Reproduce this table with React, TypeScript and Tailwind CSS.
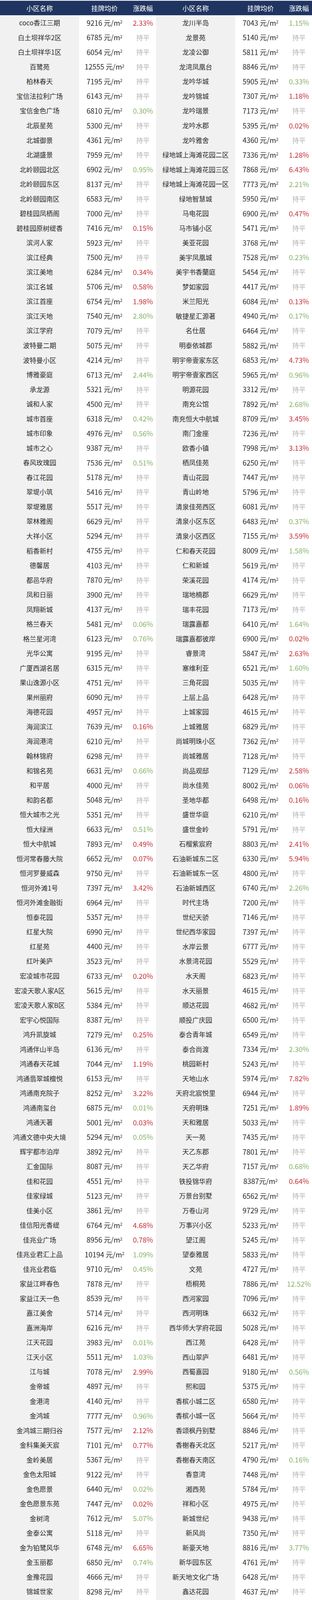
import React from 'react';

// name price change | name price change   ("-" = 持平, r = 上涨红, g = 绿)
const RAW = `
coco香江三期 9216 r2.33 龙川半岛 7043 g1.15
白土坝祥华2区 6785 - 龙景苑 5140 -
白土坝祥华1区 6054 - 龙凌公御 5811 -
百鹭苑 12555 - 龙湾凤凰台 8846 -
柏林春天 7195 - 龙吟华城 5905 g0.33
宝信法拉利广场 6143 - 龙吟锦城 7307 r1.18
宝信金色广场 6810 g0.30 龙吟瑞景 7173 -
北辰星苑 5300 - 龙吟水郡 5395 r0.02
北城御景 4361 - 龙吟雅舍 4360 -
北湖盛景 7959 - 绿地城上海滩花园二区 7336 r1.28
北岭颐园北区 6902 g0.95 绿地城上海滩花园三区 7868 r6.43
北岭颐园东区 8137 - 绿地城上海滩花园一区 7773 g2.21
北岭颐园南区 6583 - 绿地智慧城 5950 -
碧桂园凤栖阁 7000 - 马电花园 6900 r0.47
碧桂园原树缇香 7416 r0.15 马市铺小区 5471 -
滨河人家 5923 - 美亚花园 3768 -
滨江经典 7500 - 美宇凤凰城 7528 g0.23
滨江美地 6284 r0.34 美宇书香蘭庭 5454 -
滨江名城 5706 r0.58 梦如家园 4417 -
滨江首座 6754 r1.98 米兰阳光 6084 r0.13
滨江天地 7540 g2.80 敏捷星汇源著 4940 g0.17
滨江学府 7079 - 名仕居 6464 -
波特曼二期 5075 - 明泰依城郡 5882 -
波特曼小区 4214 - 明宇帝壹家东区 6853 r4.73
博雅豪庭 6713 g2.44 明宇帝壹家西区 5965 g0.96
承龙源 5321 - 明源花园 3312 -
诚和人家 4500 - 南充公馆 7892 g2.68
城市首座 6318 g0.42 南充恒大中航城 8709 r3.45
城市印象 4976 g0.56 南门金座 7236 -
城市之心 9387 - 欧香小镇 7998 r3.13
春风玫瑰园 7536 g0.51 栖凤佳苑 6250 -
春江花园 5178 - 青山花园 7447 -
翠堤小筑 5416 - 青山岭地 5796 -
翠堤雅居 5517 - 清泉佳苑西区 6081 -
翠林雅阁 6629 - 清泉小区东区 6483 g0.37
大祥小区 5294 - 清泉小区西区 7155 r3.59
稻香新村 4755 - 仁和春天花园 8009 g1.58
德馨居 4103 - 仁和新城 5619 -
都邑华府 7870 - 荣溪花园 4174 -
凤和日丽 3900 - 瑞地楠郡 6629 -
凤翔新城 4137 - 瑞丰花园 7173 -
格兰春天 5481 g0.06 瑞露嘉都 6410 g1.64
格兰星河湾 6123 g0.76 瑞露嘉都彼岸 6900 r0.02
光华公寓 9195 - 睿景湾 5847 r2.63
广厦西湖名居 6315 - 塞维利亚 6521 g1.60
果山逸源小区 4751 - 三角花园 5035 -
果州丽府 6090 - 上层上品 6428 -
海德花园 4957 - 上城家园 4615 -
海润滨江 7639 r0.16 上城雅居 6829 -
海润港湾 6210 - 尚城明珠小区 7362 -
翰林锦府 6298 - 尚城雅居 7128 -
和锦名苑 6631 g0.66 尚品观邸 7129 r2.58
和平居 4000 - 尚水佳苑 8002 r0.06
和韵名都 5048 - 圣地华都 6498 r0.16
恒大城市之光 5351 - 盛世华庭 6210 -
恒大绿洲 6633 g0.51 盛世金岭 5791 -
恒大中航城 7893 r0.49 石榴紫宸府 8803 r2.41
恒河常春藤大院 6652 r0.07 石油新城东二区 6330 r5.94
恒河罗曼威森 9750 - 石油新城东一区 4800 -
恒河外滩1号 7397 r3.42 石油新城西区 6740 g2.26
恒河外滩金融街 6964 - 时代主场 7200 -
恒泰花园 5357 - 世纪天骄 7146 -
红星大院 6990 - 世纪西华家园 7397 -
红星苑 4400 - 水岸云景 6777 -
红叶美庐 3523 - 水景湾花园 5529 -
宏凌城市花园 6733 r0.20 水天阁 6823 -
宏凌天歌人家A区 5615 - 水天丽景 4615 -
宏凌天歌人家B区 5384 - 顺达花园 4682 -
宏宇心悦国际 8387 - 顺投广庆园 6500 -
鸿升凯旋城 7279 r0.25 泰合青年城 6549 -
鸿通伴山半岛 6136 - 泰合尚渡 7334 g2.30
鸿通春天花城 7044 r1.19 桃园新村 5243 -
鸿通翡翠城檀悦 6153 - 天地山水 5974 r7.82
鸿通南充院子 8252 r3.22 天府北宸悦里 6944 -
鸿通南玺台 6875 g0.01 天府明珠 7251 r1.89
鸿通天著 5001 r0.03 天和雅居 5033 -
鸿通文德中央大境 5294 g0.05 天一苑 7435 -
辉宇都市泊岸 3892 - 天乙东郡 7801 -
汇金国际 8087 - 天乙华府 7157 g0.68
佳和花园 4551 - 铁投锦华府 8387! r0.64
佳家绿城 5123 - 万景台别墅 6562 -
佳美小区 3861 - 万卷山河 9729 -
佳信阳光香缇 6764 r4.68 万事兴小区 5233 -
佳兆业广场 8956 r0.78 望江阁 5245 -
佳兆业君汇上品 10194 g1.09 望泰雅居 5833 -
佳兆业君临 9710 g0.45 文苑 4727 -
家益江畔春色 7878 - 梧桐苑 7886 g12.52
家益江天一色 8539 - 西河家园 7096 -
嘉江美舍 5714 - 西河明珠 6632 -
嘉洲海岸 6216 - 西华师大学府花园 5028 -
江天花园 3983 g0.01 西江苑 6428 -
江天小区 5511 g1.03 西山翠庐 6481 -
江与城 7078 r2.99 西蜀嘉园 9180 g0.56
金帝城 4897 - 熙和园 5375 -
金港湾 4140 - 香槟小城二区 6580 -
金鸿城 7777 g0.96 香槟小城一区 5664 -
金鸿城三期归谷 7577 r2.12 香颂枫丹别墅 8846 -
金科集美天宸 7101 r0.77 香榭春天北区 5217 -
金岭美居 5367 - 香榭春天南区 4790 g0.16
金色太阳城 9122 - 香意湾 7448 -
金色愿景 6440 g0.02 湘西苑 5784 -
金色愿景东苑 7447 r0.02 祥和小区 4975 -
金树湾 7612 g5.07 新城世纪 9438 -
金泰公寓 5118 - 新风尚 7350 -
金为铂鹭风华 6748 r6.65 新豪天地 8816 g3.77
金玉丽都 6850 g0.74 新华园东区 4761 -
金豫花园 4666 - 新天地文化广场 6428 -
锦城世家 8298 - 鑫达花园 4637 -
锦上花苑 6737 g0.47 星光苑 5510 -
锦绣北湖 10000 - 星宇朗韵 7611 -
锦绣果州 3956 - 兴熙南 5428 -
锦绣华庭 7586 - 杏林小区 8452 -
锦绣江山东区 6393 - 延福雅居 5433 -
晶典雅筑 6315 - 阳光珑悦台 7534 -
景上云天 6715 g0.02 阳光威尼斯 5703 -
境界 7059 r0.52 颐和嘉园东区 7469 g0.79
骏达小区 4760 - 颐和嘉园西区 6391 g2.25
卡布基诺二期 5584 - 印象森林 6687 r1.09
卡布基诺一期 6739 - 应范家园 6976 -
凯旋帝景 7653 - 英伦城邦 9903 r0.87
康路小区 4469 - 潆凤花园 4796 -
康馨阳光 5500 - 潆兴小区 4078 -
科华熙和公馆 7814 - 悠山丽景 6629 r1.91
科华云玺台 5296 - 友合苑 4564 -
兰山香榭 6288 - 宇华公寓 5597 -
蓝光COCO香江二期 8059 r0.21 玉桂苑 4111 -
蓝光COCO香江一期 9252 r0.11 钰岭锦城 5128 -
蓝光香江国际 9378 r0.86 裕民苑 4400 -
蓝光雍锦半岛 8174 g0.64 悦府 9147 -
蓝润春风屿楠 5297 r0.28 悦中心 7200 -
浪高凯悦 6133 - 云岭花园 4183 -
浪琴海岸 7307 - 云庐 6421 r6.39
乐民苑小区 5300 - 长城源 5666 -
丽江花园 4300 - 正大花园 5109 -
丽景花园 4619 - 中梁壹号院 8545 g4.42
利澳花园 6477 - 中南尚景阅 6793 r0.33
燎原小区 6515 - 中南尚座 4814 -
凌凯春天 6972 g0.62 中南时代外滩 6424 -
领地蘭台府 7772 r1.76 中南世纪城 8582 g1.70
领地天屿 7074 r1.23 中旺雅居 4950 -
龙川半岛 7043 g1.15 筑韵丽都花园 7235 -
龙景苑 5140 - 紫荆音乐花园 5250 -
龙凌公御 5811 - 紫罗兰大厦 7111 -
龙湾凤凰台 8846 - 左岸枫景 6410 g1.06
`;

type Entry = { name: string; price: string; change: string };

const rows: [Entry, Entry][] = RAW.trim()
  .split('\n')
  .map((line) => {
    const p = line.trim().split(/\s+/);
    return [
      { name: p[0], price: p[1], change: p[2] },
      { name: p[3], price: p[4], change: p[5] },
    ];
  });

const FONT = { fontFamily: '"Noto Sans CJK SC", "Noto Sans", sans-serif' };

function Change({ value }: { value: string }) {
  if (value === '-') return <span className="text-[#b4b4b4] text-[17px]">持平</span>;
  const up = value[0] === 'r';
  return (
    <span className={up ? 'text-[#c7353d] text-[18px]' : 'text-[#8bb46c] text-[18px]'}>
      {value.slice(1)}%
    </span>
  );
}

function Price({ value }: { value: string }) {
  const tight = value.endsWith('!');
  const num = tight ? value.slice(0, -1) : value;
  return (
    <span className="text-[#2b2b2b] text-[18px]">
      {num}
      {tight ? '' : ' '}元/m<sup className="text-[11px]">2</sup>
    </span>
  );
}

function Half({ entry }: { entry: Entry }) {
  return (
    <div className="flex min-h-0 overflow-hidden">
      <div className="w-[203px] bg-[#f1f1f1] flex items-center justify-center text-[#2b2b2b] whitespace-nowrap">
        {entry.name}
      </div>
      <div className="w-[130px] bg-white flex items-center justify-center whitespace-nowrap">
        <Price value={entry.price} />
      </div>
      <div className="w-[67px] bg-white flex items-center justify-center whitespace-nowrap">
        <Change value={entry.change} />
      </div>
    </div>
  );
}

function HeaderHalf() {
  return (
    <div className="flex">
      <div className="w-[203px] flex items-center justify-center">小区名称</div>
      <div className="w-[130px] flex items-center justify-center">挂牌均价</div>
      <div className="w-[67px] flex items-center justify-center">涨跌幅</div>
    </div>
  );
}

export default function App() {
  return (
    <div className="w-[800px] h-[5483px] overflow-hidden flex flex-col bg-white text-[17px] leading-none" style={FONT}>
      <div className="shrink-0 pt-[2px] bg-[#f4f4f4]">
        <div className="grid grid-cols-2 h-[37px] bg-[#1f3461] text-white">
          <HeaderHalf />
          <HeaderHalf />
        </div>
      </div>
      <div className="shrink-0 grid grid-cols-2 grid-rows-[repeat(144,minmax(0,1fr))] h-[5405px] overflow-hidden">
        {rows.map(([l, r], i) => (
          <React.Fragment key={i}>
            <Half entry={l} />
            <Half entry={r} />
          </React.Fragment>
        ))}
      </div>
      <div className="flex-1 min-h-0 flex items-center justify-center text-[#bfbfbf]">
        *以上数据综合整理自各大二手房交易平台，截止时间为2023年5月，仅供参考
      </div>
    </div>
  );
}
